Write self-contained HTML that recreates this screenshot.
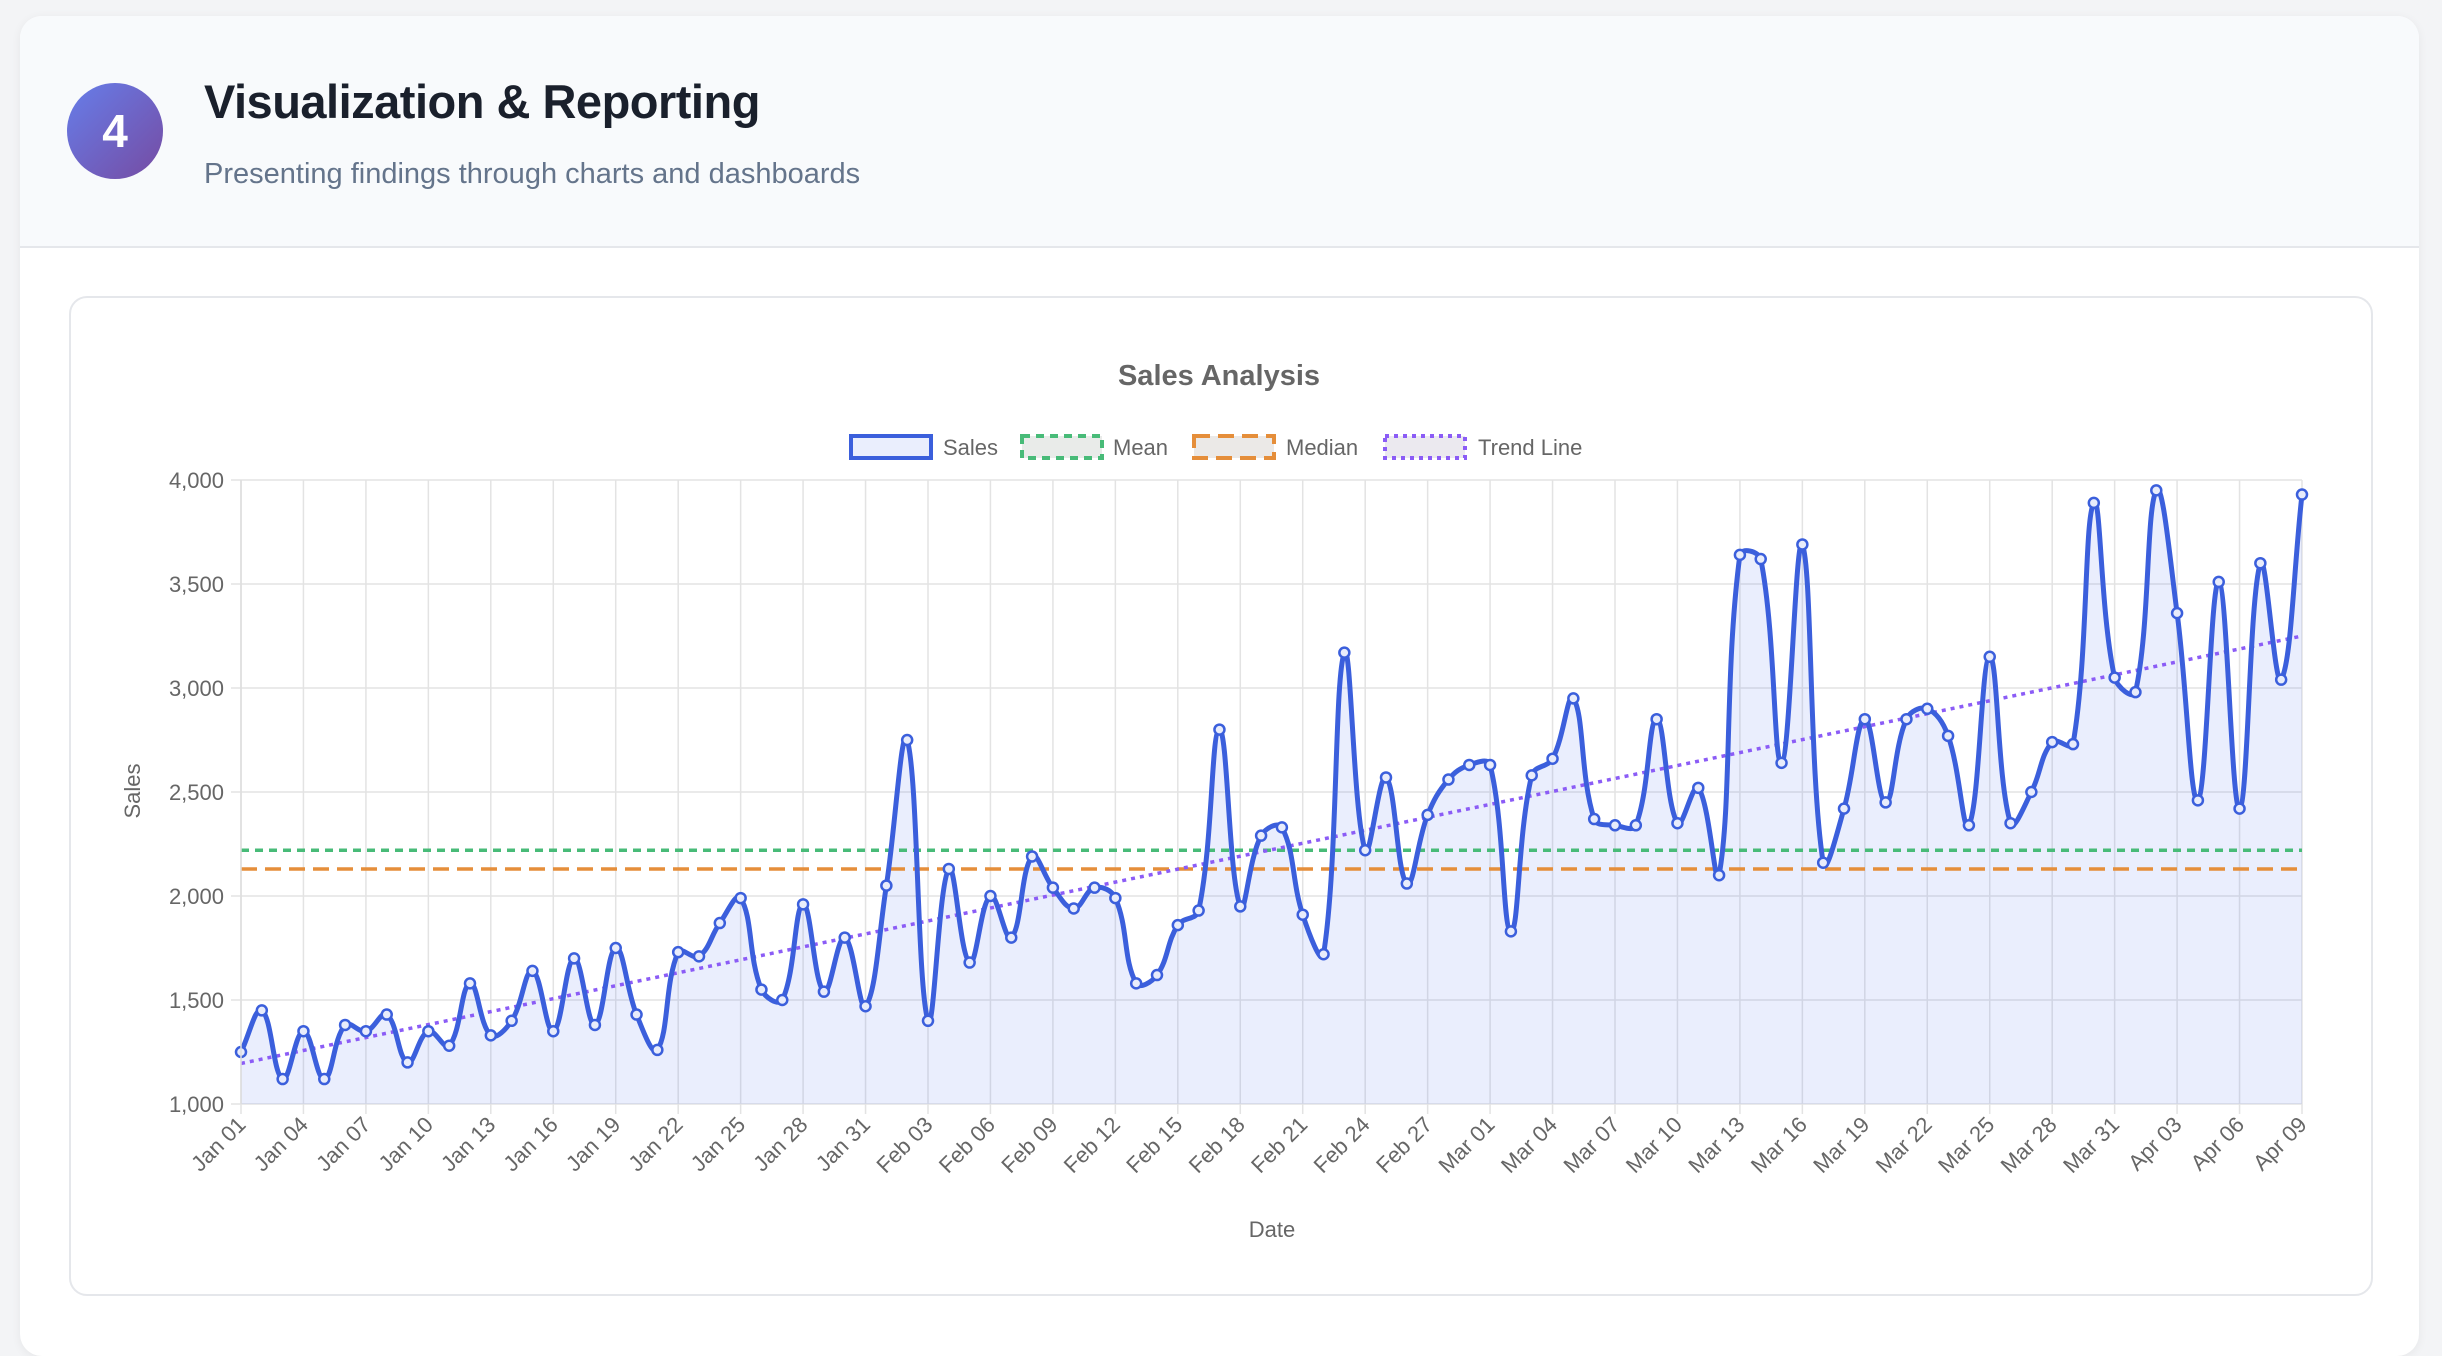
<!DOCTYPE html>
<html><head><meta charset="utf-8">
<style>
html,body{margin:0;padding:0;background:#f3f4f6;width:2442px;height:1326px;overflow:hidden;font-family:"Liberation Sans",sans-serif;}
.card{position:absolute;left:20px;top:16px;width:2399px;height:1340px;background:#fff;border-radius:22px;box-shadow:0 2px 10px rgba(0,0,0,0.06);overflow:hidden;}
.head{height:230px;background:#f8fafc;border-bottom:2px solid #e5e7eb;position:relative;}
.badge{position:absolute;left:47px;top:67px;width:96px;height:96px;border-radius:50%;background:linear-gradient(135deg,#667eea,#764ba2);color:#fff;font-weight:bold;font-size:46px;display:flex;align-items:center;justify-content:center;}
.title{position:absolute;left:184px;top:58px;font-size:47px;font-weight:bold;color:#1a202c;letter-spacing:-0.5px;}
.sub{position:absolute;left:184px;top:142px;font-size:29px;color:#64748b;}
.box{position:absolute;left:69px;top:296px;width:2300px;height:996px;border:2px solid #e5e7eb;border-radius:18px;background:#fff;}
svg{position:absolute;left:0;top:0;}
</style></head><body>
<div class="card">
<div class="head"><div class="badge">4</div><div class="title">Visualization &amp; Reporting</div><div class="sub">Presenting findings through charts and dashboards</div></div>
</div>
<div class="box"></div>
<svg id="c" width="2442" height="1326" font-family="Liberation Sans, sans-serif"></svg>
<script>
var v=[1250,1450,1120,1350,1120,1380,1350,1430,1200,1350,1280,1580,1330,1400,1640,1350,1700,1380,1750,1430,1260,1730,1710,1870,1990,1550,1500,1960,1540,1800,1470,2050,2750,1400,2130,1680,2000,1800,2190,2040,1940,2040,1990,1580,1620,1860,1930,2800,1950,2290,2330,1910,1720,3170,2220,2570,2060,2390,2560,2630,2630,1830,2580,2660,2950,2370,2340,2340,2850,2350,2520,2100,3640,3620,2640,3690,2160,2420,2850,2450,2850,2900,2770,2340,3150,2350,2500,2740,2730,3890,3050,2980,3950,3360,2460,3510,2420,3600,3040,3930];
var L=241,R=2302,T=480,B=1104,N=v.length;
function X(i){return L+(R-L)*i/(N-1);}
function Y(val){return B-(val-1000)/3000*(B-T);}
var s='';
for(var k=0;k<=6;k++){var y=B-k*(B-T)/6;s+='<line x1="'+(L-10)+'" x2="'+R+'" y1="'+y+'" y2="'+y+'" stroke="#e3e3e3" stroke-width="1.5"/>';
var lab=(1000+k*500).toLocaleString('en-US');s+='<text x="'+(L-17)+'" y="'+(y+8)+'" text-anchor="end" font-size="22" fill="#666">'+lab+'</text>';}
var mon=['Jan','Feb','Mar','Apr'],md=[31,29,31,30];
for(var i=0;i<N;i+=3){var x=X(i);s+='<line x1="'+x+'" x2="'+x+'" y1="'+T+'" y2="'+(B+10)+'" stroke="#e3e3e3" stroke-width="1.5"/>';
var d=i,m=0;while(d>=md[m]){d-=md[m];m++;}var lb=mon[m]+' '+(d+1<10?'0':'')+(d+1);
s+='<text transform="translate('+(x+6)+','+(B+22)+') rotate(-45)" text-anchor="end" font-size="22" fill="#666">'+lb+'</text>';}
var pts=v.map(function(a,i){return [X(i),Y(a)];});
var cp=[];
for(var i=0;i<N;i++){var p=pts[i],pr=pts[i-1]||p,nx=pts[i+1]||p;
var d01=Math.hypot(p[0]-pr[0],p[1]-pr[1]),d12=Math.hypot(nx[0]-p[0],nx[1]-p[1]);
var fa=d01/(d01+d12)||0,fb=d12/(d01+d12)||0;fa*=0.4;fb*=0.4;
cp.push([[p[0]-fa*(nx[0]-pr[0]),p[1]-fa*(nx[1]-pr[1])],[p[0]+fb*(nx[0]-pr[0]),p[1]+fb*(nx[1]-pr[1])]]);}
var dp='M'+pts[0][0]+','+pts[0][1];
for(var i=1;i<N;i++){dp+=' C'+cp[i-1][1][0]+','+cp[i-1][1][1]+' '+cp[i][0][0]+','+cp[i][0][1]+' '+pts[i][0]+','+pts[i][1];}
s+='<path d="'+dp+' L'+R+','+B+' L'+L+','+B+'Z" fill="rgba(66,99,235,0.11)"/>';
s+='<line x1="'+L+'" x2="'+R+'" y1="'+Y(2220)+'" y2="'+Y(2220)+'" stroke="#48bb78" stroke-width="3.5" stroke-dasharray="8,6"/>';
s+='<line x1="'+L+'" x2="'+R+'" y1="'+Y(2130)+'" y2="'+Y(2130)+'" stroke="#e58e3a" stroke-width="3.5" stroke-dasharray="16,8"/>';
s+='<line x1="'+L+'" x2="'+R+'" y1="'+Y(1195)+'" y2="'+Y(3250)+'" stroke="#8b5cf6" stroke-width="3.5" stroke-dasharray="4,5"/>';
s+='<path d="'+dp+'" fill="none" stroke="#3b5fdc" stroke-width="5"/>';
for(var i=0;i<N;i++)s+='<circle cx="'+pts[i][0]+'" cy="'+pts[i][1]+'" r="5" fill="#e8ecfb" stroke="#3b5fdc" stroke-width="2.5"/>';
s+='<line x1="'+L+'" x2="'+L+'" y1="'+T+'" y2="'+B+'" stroke="#ddd" stroke-width="1.5"/>';
s+='<text x="1219" y="385" text-anchor="middle" font-size="29" font-weight="bold" fill="#666">Sales Analysis</text>';
s+='<text x="1272" y="1237" text-anchor="middle" font-size="22" fill="#666">Date</text>';
s+='<text transform="translate(140,791) rotate(-90)" text-anchor="middle" font-size="22" fill="#666">Sales</text>';
function lg(x,tx,stroke,dash,fill,txt){s+='<rect x="'+x+'" y="436" width="80" height="22" fill="'+fill+'" stroke="'+stroke+'" stroke-width="4" '+(dash?'stroke-dasharray="'+dash+'"':'')+'/>';
s+='<text x="'+tx+'" y="455" font-size="22" fill="#666">'+txt+'</text>';}
lg(851,943,'#3b5fdc','','rgba(66,99,235,0.11)','Sales');
lg(1022,1113,'#48bb78','8,6','#e9ebe9','Mean');
lg(1194,1286,'#e58e3a','16,8','#ebe9e7','Median');
lg(1385,1478,'#8b5cf6','4,5','#ebe9ef','Trend Line');
document.getElementById('c').innerHTML=s;
</script>
</body></html>
